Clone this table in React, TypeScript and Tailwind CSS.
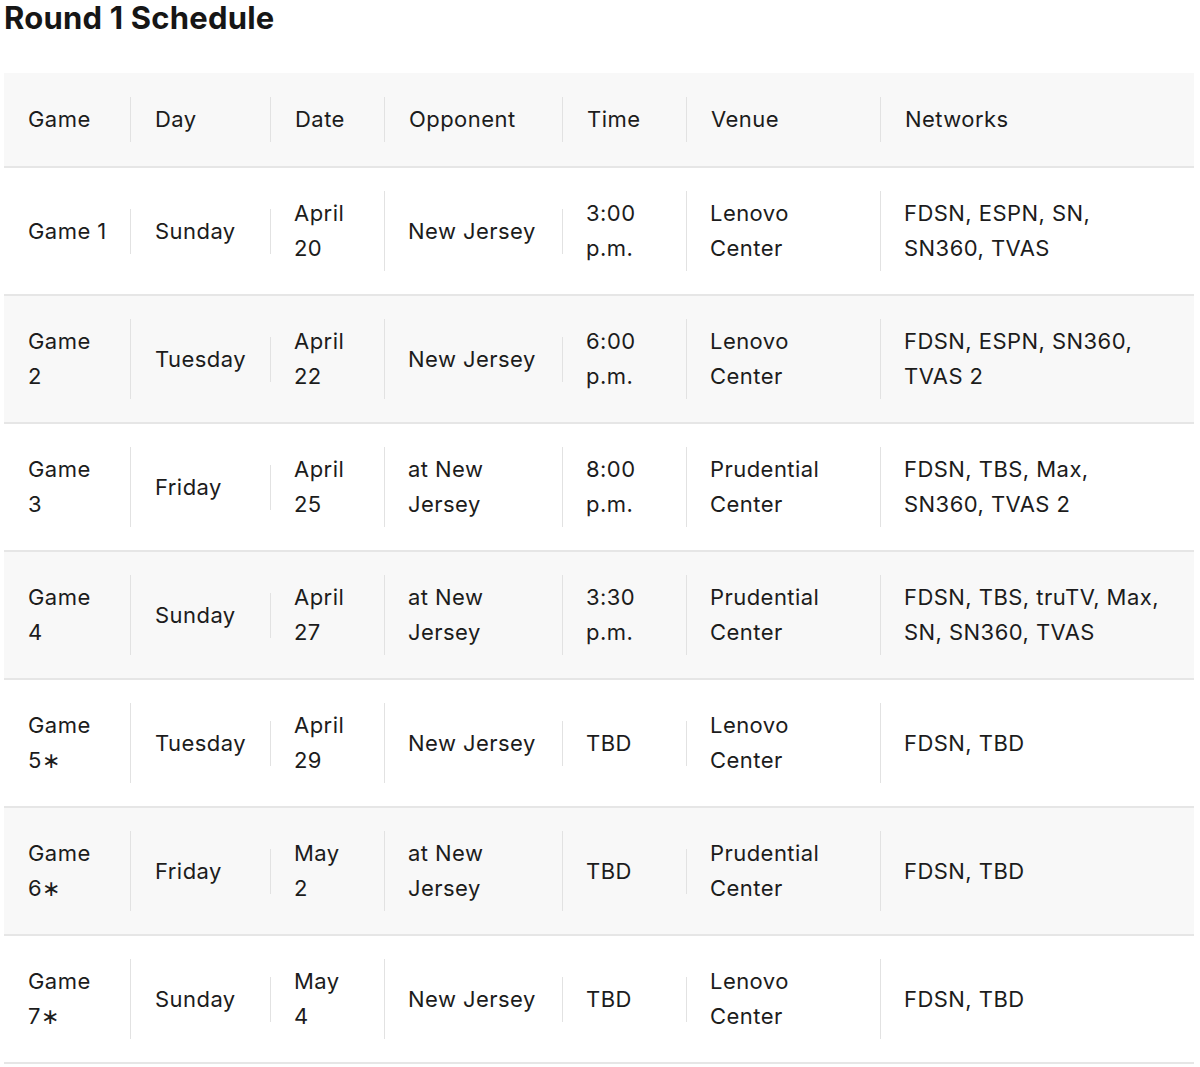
const cols = [
  { label: "Game", w: "w-[127px]" },
  { label: "Day", w: "w-[140px]" },
  { label: "Date", w: "w-[114px]" },
  { label: "Opponent", w: "w-[178px]" },
  { label: "Time", w: "w-[124px]" },
  { label: "Venue", w: "w-[194px]" },
  { label: "Networks", w: "w-[313px]" },
];

// each cell is a list of lines
const games: string[][][] = [
  [["Game 1"], ["Sunday"], ["April", "20"], ["New Jersey"], ["3:00", "p.m."], ["Lenovo", "Center"], ["FDSN, ESPN, SN,", "SN360, TVAS"]],
  [["Game", "2"], ["Tuesday"], ["April", "22"], ["New Jersey"], ["6:00", "p.m."], ["Lenovo", "Center"], ["FDSN, ESPN, SN360,", "TVAS 2"]],
  [["Game", "3"], ["Friday"], ["April", "25"], ["at New", "Jersey"], ["8:00", "p.m."], ["Prudential", "Center"], ["FDSN, TBS, Max,", "SN360, TVAS 2"]],
  [["Game", "4"], ["Sunday"], ["April", "27"], ["at New", "Jersey"], ["3:30", "p.m."], ["Prudential", "Center"], ["FDSN, TBS, truTV, Max,", "SN, SN360, TVAS"]],
  [["Game", "5∗"], ["Tuesday"], ["April", "29"], ["New Jersey"], ["TBD"], ["Lenovo", "Center"], ["FDSN, TBD"]],
  [["Game", "6∗"], ["Friday"], ["May", "2"], ["at New", "Jersey"], ["TBD"], ["Prudential", "Center"], ["FDSN, TBD"]],
  [["Game", "7∗"], ["Sunday"], ["May", "4"], ["New Jersey"], ["TBD"], ["Lenovo", "Center"], ["FDSN, TBD"]],
];

function Cell({ lines, last }: { lines: string[]; last: boolean }) {
  return (
    <div className={last ? "py-[5px]" : "py-[5px] border-r border-[#e2e2e2]"}>
      {lines.map((l, i) => (
        <div key={i} className="whitespace-nowrap">{l}</div>
      ))}
    </div>
  );
}

export default function App() {
  return (
    <div className="bg-white min-h-screen px-[4px] text-[#1c1c1c]" style={{ fontFamily: "Inter, 'Noto Sans', sans-serif" }}>
      <h2 className="text-[31px] leading-[36px] font-bold tracking-[0.2px] text-[#161616]">Round 1 Schedule</h2>

      <table className="mt-[37px] w-[1190px] table-fixed border-collapse text-[22px] leading-[35px] tracking-[0.45px]">
        <colgroup>
          {cols.map(c => <col key={c.label} className={c.w} />)}
        </colgroup>
        <thead>
          <tr className="bg-[#f8f8f8] border-b-2 border-[#e6e6e6]">
            {cols.map((c, i) => (
              <th key={c.label} className="pl-[24px] py-[24px] text-left font-normal align-middle">
                <Cell lines={[c.label]} last={i === cols.length - 1} />
              </th>
            ))}
          </tr>
        </thead>
        <tbody>
          {games.map((row, r) => (
            <tr key={r} className={r % 2 === 1 ? "bg-[#f8f8f8] border-b-2 border-[#e6e6e6]" : "bg-white border-b-2 border-[#e6e6e6]"}>
              {row.map((lines, i) => (
                <td key={i} className={i === 0 || i === 1 ? "pl-[24px] py-[23px] align-middle" : "pl-[23px] py-[23px] align-middle"}>
                  <Cell lines={lines} last={i === row.length - 1} />
                </td>
              ))}
            </tr>
          ))}
        </tbody>
      </table>
    </div>
  );
}
